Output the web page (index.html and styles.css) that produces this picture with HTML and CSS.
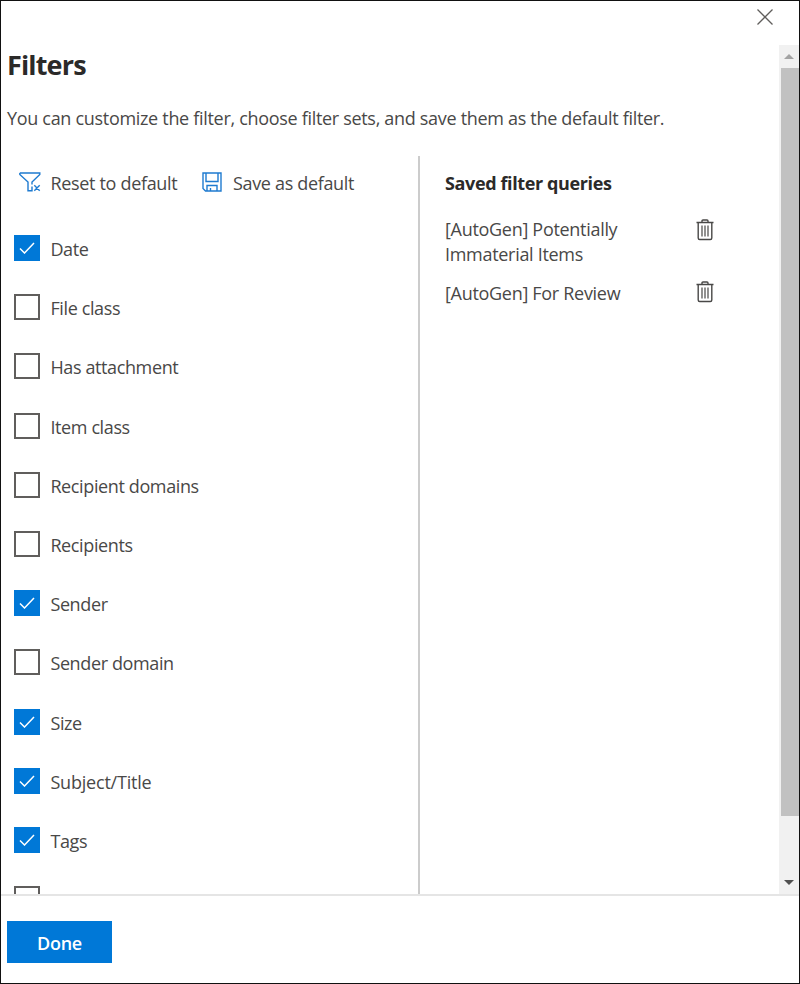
FILE: index.html
```html
<!DOCTYPE html>
<html lang="en">
<head>
<meta charset="utf-8">
<title>Filters</title>
<link rel="stylesheet" href="styles.css">
</head>
<body>
<svg class="defs" aria-hidden="true">
  <symbol id="trash" viewBox="0 0 18 22"><path d="M.5 3.500h17M6 3.500V2q0-1 1-1h4q1 0 1 1v1.500M2.200 3.500v15.500q0 1.500 1.500 1.500h10.600q1.500 0 1.500-1.500V3.500" fill="none" stroke="currentColor" stroke-width="1.400"/><path d="M6 6.500v11M9 6.500v11M12 6.500v11" fill="none" stroke="currentColor" stroke-width="1.200"/></symbol>
</svg>
<div class="panel">
  <header class="topbar">
    <svg class="close" viewBox="0 0 16 16"><path d="M.5.5l15 15M15.500.5l-15 15"/></svg>
  </header>
  <div class="scroll">
    <main class="content">
      <h1>Filters</h1>
      <p class="intro">You can customize the filter, choose filter sets, and save them as the default filter.</p>
      <div class="columns">
        <section class="filters">
          <div class="commands">
            <svg class="funnel" viewBox="0 0 22 20"><path d="M.8 1h20v1.500l-7.800 7.500v2.500M13 14.500v4.300H9V10L.8 2.500V1M15.300 13.300l5.400 5.400M20.700 13.300l-5.400 5.400"/></svg>
            <span class="reset">Reset to default</span>
            <svg class="disk" viewBox="0 0 20 20"><path d="M1 1h18v18H3.500L1 16.500zM4 1v8.500h12V1M5 19v-5.500h10V19M8.500 19v-3"/></svg>
            <span class="save">Save as default</span>
          </div>
          <ul class="options">
            <li><i class="box on"><svg viewBox="0 0 16 12"><path d="M1 6.500L5.500 11 15 1"/></svg></i><span>Date</span></li>
            <li><i class="box"></i><span>File class</span></li>
            <li><i class="box"></i><span>Has attachment</span></li>
            <li><i class="box"></i><span>Item class</span></li>
            <li><i class="box"></i><span>Recipient domains</span></li>
            <li><i class="box"></i><span>Recipients</span></li>
            <li><i class="box on"><svg viewBox="0 0 16 12"><path d="M1 6.500L5.500 11 15 1"/></svg></i><span>Sender</span></li>
            <li><i class="box"></i><span>Sender domain</span></li>
            <li><i class="box on"><svg viewBox="0 0 16 12"><path d="M1 6.500L5.500 11 15 1"/></svg></i><span>Size</span></li>
            <li><i class="box on"><svg viewBox="0 0 16 12"><path d="M1 6.500L5.500 11 15 1"/></svg></i><span class="subject">Subject/Title</span></li>
            <li><i class="box on"><svg viewBox="0 0 16 12"><path d="M1 6.500L5.500 11 15 1"/></svg></i><span>Tags</span></li>
            <li class="last"><i class="box"></i><span>Workload</span></li>
          </ul>
        </section>
        <section class="saved">
          <h2>Saved filter queries</h2>
          <div class="query"><span>[AutoGen] Potentially<br>Immaterial Items</span><svg class="trash"><use href="#trash"/></svg></div>
          <div class="query second"><span>[AutoGen] For Review</span><svg class="trash"><use href="#trash"/></svg></div>
        </section>
      </div>
    </main>
    <div class="track"><i class="up"></i><i class="thumb"></i><i class="down"></i></div>
  </div>
  <footer><button>Done</button></footer>
</div>
</body>
</html>
```
FILE: styles.css
```css
* { box-sizing: border-box; }
body { margin: 0; background: #fff; color: #494847; font: 18px/25px "Open Sans", "Noto Sans", sans-serif; letter-spacing: -.33px; }
.defs { display: none; }
.panel { width: 800px; height: 984px; border: 1px solid #111; display: flex; flex-direction: column; overflow: hidden; }
.topbar { height: 44px; flex: none; display: flex; justify-content: flex-end; padding: 8px 26px 0 0; }
.close { width: 16px; height: 16px; stroke: #605e5c; stroke-width: 1.3; fill: none; }
.scroll { height: 849px; flex: none; display: flex; overflow: hidden; }
.content { flex: 1; padding-left: 6px; overflow: hidden; }
h1 { margin: 2px 0 0; font-size: 27px; line-height: 36px; font-weight: 700; color: #2b2a29; letter-spacing: -.85px; }
.intro { margin: 23px 0 0; white-space: nowrap; letter-spacing: -.31px; }
.columns { display: flex; margin-top: 25px; height: 740px; }
.filters { width: 413px; flex: none; border-right: 2px solid #ccc; padding: 14px 0 0 7px; }
.commands { display: flex; align-items: center; height: 26px; white-space: nowrap; }
.commands svg { stroke: #1f7bd0; fill: none; stroke-width: 1.4; margin-bottom: 2px; flex: none; }
.funnel { width: 22px; height: 20px; margin-left: 5px; }
.reset { margin-left: 9.5px; width: 128.5px; }
.disk { width: 20px; height: 20px; margin-left: 23px; }
.save { margin-left: 11px; }
.options { list-style: none; margin: 39px 0 0; padding: 0; }
.options li { display: flex; height: 59.2px; white-space: nowrap; }
.options span { margin: 2px 0 0 10.4px; letter-spacing: -.38px; }
.options .subject { letter-spacing: -.2px; }
.options .last span { margin-top: 3.3px; }
.box { width: 26px; height: 26px; border: 2px solid #605e5c; flex: none; }
.box.on { border: 0; background: #0078d7; display: flex; align-items: center; justify-content: center; }
.box svg { width: 16px; height: 12px; fill: none; stroke: #fff; stroke-width: 1.5; }
.saved { flex: 1; padding: 15px 0 0 25px; }
h2 { margin: 0 0 21px; font-size: 18px; line-height: 25px; font-weight: 700; color: #2b2a29; letter-spacing: -.38px; }
.query { display: flex; justify-content: space-between; margin-bottom: 14px; padding-right: 65px; white-space: nowrap; letter-spacing: -.3px; }
.trash { width: 18px; height: 22px; margin-top: 2px; flex: none; color: #494847; }
.second .trash { margin-top: 0; }
.track { width: 20px; flex: none; background: #f1f1f1; display: flex; flex-direction: column; align-items: center; }
.up { margin-top: 9px; border: 5px solid transparent; border-top: 0; border-bottom-color: #a3a3a3; }
.thumb { width: 18px; height: 748px; margin: 9px 0 0 2px; background: #c1c1c1; }
.down { margin-top: 64px; border: 5px solid transparent; border-bottom: 0; border-top-color: #505050; }
footer { border-top: 2px solid #e5e5e5; flex: 1; padding: 25px 6px 0; }
button { display: block; width: 105px; height: 42px; border: 0; padding: 2px 0 0; background: #0078d7; color: #fff; font: 600 18px/25px "Open Sans", sans-serif; letter-spacing: -.3px; }
```
